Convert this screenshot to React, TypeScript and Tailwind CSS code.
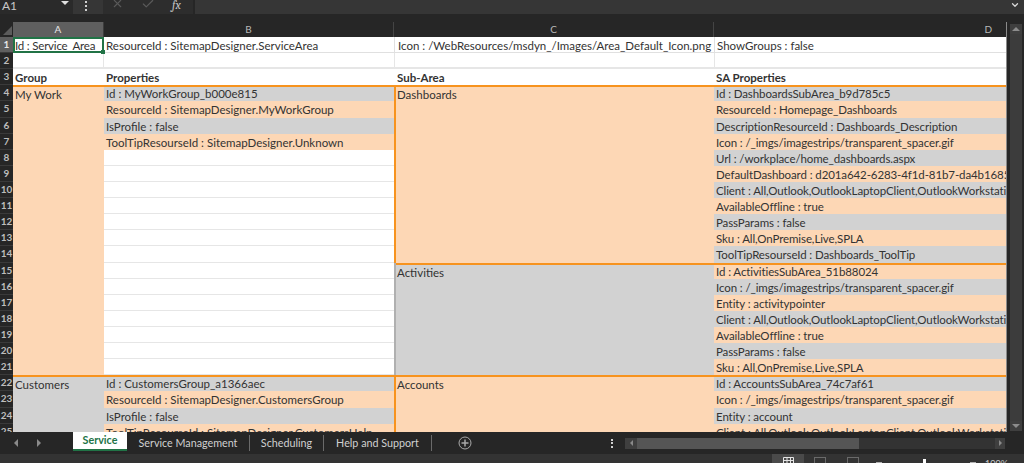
import { Fragment } from 'react';
import { X, Check, ChevronDown } from 'lucide-react';

const ICON = 'Icon : /_imgs/imagestrips/transparent_spacer.gif';
const CLIENT = 'Client : All,Outlook,OutlookLaptopClient,OutlookWorkstationClient,Web';

const bProps: Record<number, string> = {
  4: 'Id : MyWorkGroup_b000e815',
  5: 'ResourceId : SitemapDesigner.MyWorkGroup',
  6: 'IsProfile : false',
  7: 'ToolTipResourseId : SitemapDesigner.Unknown',
  22: 'Id : CustomersGroup_a1366aec',
  23: 'ResourceId : SitemapDesigner.CustomersGroup',
  24: 'IsProfile : false',
  25: 'ToolTipResourseId : SitemapDesigner.CustomersHelp',
};

const dProps: Record<number, string> = {
  4: 'Id : DashboardsSubArea_b9d785c5',
  5: 'ResourceId : Homepage_Dashboards',
  6: 'DescriptionResourceId : Dashboards_Description',
  7: ICON,
  8: 'Url : /workplace/home_dashboards.aspx',
  9: 'DefaultDashboard : d201a642-6283-4f1d-81b7-da4b1685e695',
  10: CLIENT,
  11: 'AvailableOffline : true',
  12: 'PassParams : false',
  13: 'Sku : All,OnPremise,Live,SPLA',
  14: 'ToolTipResourseId : Dashboards_ToolTip',
  15: 'Id : ActivitiesSubArea_51b88024',
  16: ICON,
  17: 'Entity : activitypointer',
  18: CLIENT,
  19: 'AvailableOffline : true',
  20: 'PassParams : false',
  21: 'Sku : All,OnPremise,Live,SPLA',
  22: 'Id : AccountsSubArea_74c7af61',
  23: ICON,
  24: 'Entity : account',
  25: CLIENT,
};

const rows = Array.from({ length: 25 }, (_, i) => i + 1);
const cell = 'overflow-hidden whitespace-nowrap pl-[2px] text-[11.5px] leading-[17px] text-[#333333]';
const PEACH = 'bg-[#fdd7b5]';
const GREY = 'bg-[#d2d2d2]';
const TOP_LINE = 'shadow-[inset_0_2px_0_#f7931e]';

function stripe(n: number) {
  return n % 2 === 0 ? GREY : PEACH;
}

function FormulaBar() {
  return (
    <div className="flex h-[14px] flex-none overflow-hidden bg-[#363636]">
      <div className="flex w-[73px] items-start justify-between bg-[#2a2a2a] pl-[2px] pr-[4px] text-[12px] leading-[11px] text-[#c8c8c8]">
        <span>A1</span>
        <span className="mt-[1px] h-0 w-0 border-x-[4px] border-t-[4px] border-x-transparent border-t-[#e0e0e0]" />
      </div>
      <div className="flex w-[30px] flex-col items-center gap-[2px] pr-[4px] pt-[1px]">
        <span className="h-[2px] w-[2px] bg-[#d0d0d0]" />
        <span className="h-[2px] w-[2px] bg-[#d0d0d0]" />
        <span className="h-[2px] w-[2px] bg-[#d0d0d0]" />
      </div>
      <div className="flex w-[90px] items-start bg-[#2d2d2d] pl-[8px] text-[#5a5a5a]">
        <X size={13} className="mt-[-3px]" />
        <Check size={14} className="ml-[17px] mt-[-3px]" />
        <span className="ml-[17px] font-serif text-[12px] italic leading-[10px] text-[#c4c4c4]">fx</span>
      </div>
      <div className="flex-1 border-l-2 border-[#262626]" />
      <div className="flex w-[18px] justify-center">
        <ChevronDown size={10} strokeWidth={3} className="text-[#d8d8d8]" />
      </div>
    </div>
  );
}

function Sheet() {
  return (
    <div className="h-[410px] flex-none overflow-hidden">
      <div className="grid grid-cols-[13px_91px_290px_320px_292px_18px] grid-rows-[15px_repeat(25,16.11px)] bg-[#262626]">
        {/* column headers */}
        <div className="relative bg-[#262626]">
          <span className="absolute bottom-[2px] right-[1px] h-0 w-0 border-b-[9px] border-l-[9px] border-b-[#5c5c5c] border-l-transparent" />
        </div>
        <div className="border-r border-[#3c3c3c] bg-[#5f5f5f] text-center text-[10px] leading-[15px] text-[#e6e6e6]">A</div>
        <div className="border-r border-[#444444] text-center text-[10px] leading-[15px] text-[#b8b8b8]">B</div>
        <div className="border-r border-[#444444] text-center text-[10px] leading-[15px] text-[#b8b8b8]">C</div>
        <div className="pr-[14px] text-right text-[10px] leading-[15px] text-[#b8b8b8]">D</div>
        <div className="col-start-6 row-start-1 row-span-26 flex h-[410px] flex-col border-l border-[#8a8a8a] bg-[#262626] pl-[3px] pr-[2px]">
          <div className="mt-[2px] flex h-[10px] flex-none items-center justify-center bg-[#3f3f3f]">
            <span className="h-0 w-0 border-x-[4px] border-b-[4px] border-x-transparent border-b-[#8c8c8c]" />
          </div>
          <div className="flex-1 bg-[#3c3c3c]" />
          <div className="mb-[1px] flex h-[10px] flex-none items-center justify-center bg-[#3f3f3f]">
            <span className="h-0 w-0 border-x-[4px] border-t-[4px] border-x-transparent border-t-[#8c8c8c]" />
          </div>
        </div>

        {rows.map((r) => (
          <Fragment key={r}>
            <div
              className={`overflow-hidden border-b border-[#3a3a3a] text-center text-[10px] font-bold leading-[15px] ${
                r === 1 ? 'bg-[#5f5f5f] text-[#e6e6e6]' : 'bg-[#262626] text-[#bdbdbd]'
              }`}
              style={{ gridColumnStart: 1, gridRowStart: r + 1 }}
            >
              {r}
            </div>
            {r >= 8 && r <= 21 && (
              <div
                className="border-b border-[#e6e6e6] bg-white"
                style={{ gridColumnStart: 3, gridRowStart: r + 1 }}
              />
            )}
            {bProps[r] && (
              <div
                className={`${cell} ${stripe(r)} ${r === 4 || r === 22 ? TOP_LINE : ''}`}
                style={{ gridColumnStart: 3, gridRowStart: r + 1 }}
              >
                {bProps[r]}
              </div>
            )}
            {dProps[r] && (
              <div
                className={`${cell} tracking-[-0.1px] ${stripe(r)} ${r === 4 || r === 15 || r === 22 ? TOP_LINE : ''}`}
                style={{ gridColumnStart: 5, gridRowStart: r + 1 }}
              >
                {dProps[r]}
              </div>
            )}
          </Fragment>
        ))}

        {/* rows 1-3 */}
        <div className={`${cell} col-start-2 row-start-2 bg-white tracking-[-0.2px]`}>Id : Service_Area</div>
        {/* selection frame and fill handle over A1 */}
        <div className="relative z-10 col-start-2 row-start-2 border-2 border-[#217346]">
          <span className="absolute bottom-[-3px] right-[-3px] h-[4px] w-[4px] bg-[#217346]" />
        </div>
        <div className={`${cell} col-start-3 row-start-2 border-b border-[#e0e0e0] bg-white`}>ResourceId : SitemapDesigner.ServiceArea</div>
        <div className={`${cell} col-start-4 row-start-2 border-b border-l border-[#e0e0e0] bg-white pl-[3px]`}>Icon : /WebResources/msdyn_/Images/Area_Default_Icon.png</div>
        <div className={`${cell} col-start-5 row-start-2 border-b border-l border-[#e0e0e0] bg-white`}>ShowGroups : false</div>

        <div className="col-start-2 row-start-3 border-b-2 border-r border-[#e6e6e6] bg-white" />
        <div className="col-start-3 row-start-3 border-b-2 border-[#e6e6e6] bg-white" />
        <div className="col-start-4 row-start-3 border-b-2 border-l border-[#e6e6e6] bg-white" />
        <div className="col-start-5 row-start-3 border-b-2 border-l border-[#e6e6e6] bg-white" />

        <div className={`${cell} col-start-2 row-start-4 bg-white font-bold`}>Group</div>
        <div className={`${cell} col-start-3 row-start-4 bg-white font-bold`}>Properties</div>
        <div className={`${cell} col-start-4 row-start-4 bg-white pl-[3px] font-bold`}>Sub-Area</div>
        <div className={`${cell} col-start-5 row-start-4 bg-white font-bold`}>SA Properties</div>

        {/* merged cells */}
        <div className={`${cell} col-start-2 row-start-5 row-span-18 pt-[1px] ${TOP_LINE} ${PEACH}`}>My Work</div>
        <div className={`${cell} col-start-2 row-start-23 row-span-4 pt-[1px] ${TOP_LINE} ${GREY}`}>Customers</div>
        <div className={`${cell} col-start-4 row-start-5 row-span-11 pl-[3px] pt-[1px] shadow-[inset_2px_2px_0_#f7931e] ${PEACH}`}>Dashboards</div>
        <div className={`${cell} col-start-4 row-start-16 row-span-7 pl-[3px] pt-[1px] shadow-[inset_2px_0_0_#b0b0b0,inset_0_2px_0_#f7931e] ${GREY}`}>Activities</div>
        <div className={`${cell} col-start-4 row-start-23 row-span-4 pl-[3px] pt-[1px] shadow-[inset_2px_2px_0_#f7931e] ${PEACH}`}>Accounts</div>
      </div>
    </div>
  );
}

function Tabs() {
  return (
    <div className="flex h-[22px] flex-none items-center bg-[#262626] text-[10.75px] text-[#d0d0d0]">
      <div className="flex w-[73px] items-center pl-[14px]">
        <span className="h-0 w-0 border-y-[4px] border-r-[4px] border-y-transparent border-r-[#8a8a8a]" />
        <span className="ml-[19px] h-0 w-0 border-y-[4px] border-l-[4px] border-y-transparent border-l-[#8a8a8a]" />
      </div>
      <div className="flex h-[19px] w-[54px] items-center justify-center self-start border-b-2 border-[#217346] bg-white font-bold leading-none text-[#217346]">
        Service
      </div>
      <div className="flex h-[16px] w-[123px] items-center justify-center border-r border-[#6a6a6a]">Service Management</div>
      <div className="flex h-[16px] w-[74px] items-center justify-center border-r border-[#6a6a6a]">Scheduling</div>
      <div className="flex h-[16px] w-[108px] items-center justify-center border-r border-[#6a6a6a]">Help and Support</div>
      <svg width="14" height="14" viewBox="0 0 14 14" className="ml-[26px] text-[#a8a8a8]" fill="none" stroke="currentColor">
        <circle cx="7" cy="7" r="6" />
        <path d="M7 3.500v7M3.500 7h7" strokeWidth="1.500" />
      </svg>
      <div className="ml-[139px] flex flex-col gap-[1.5px]">
        <span className="h-[2px] w-[2px] bg-[#d0d0d0]" />
        <span className="h-[2px] w-[2px] bg-[#d0d0d0]" />
        <span className="h-[2px] w-[2px] bg-[#d0d0d0]" />
      </div>
      <div className="ml-[12px] flex h-[11px] w-[380px] items-center bg-[#333333]">
        <div className="flex h-full w-[12px] items-center justify-center bg-[#3f3f3f]">
          <span className="h-0 w-0 border-y-[3px] border-r-[3px] border-y-transparent border-r-[#8a8a8a]" />
        </div>
        <div className="h-full w-[222px] bg-[#555555]" />
        <div className="flex-1" />
        <div className="flex h-full w-[10px] items-center justify-center bg-[#3f3f3f]">
          <span className="h-0 w-0 border-y-[3px] border-l-[3px] border-y-transparent border-l-[#8a8a8a]" />
        </div>
      </div>
    </div>
  );
}

function StatusBar() {
  return (
    <div className="flex h-[9px] flex-none items-start overflow-hidden bg-[#333333] text-[#c8c8c8]">
      <div className="ml-[772px] flex h-full w-[32px] justify-center bg-[#4a4a4a] pt-[3px]">
        <svg width="11" height="8" viewBox="0 0 11 8" fill="none" stroke="#e4e4e4" className="flex-none">
          <path d="M.5.5h10v8H.5zM.5 3.500h10M4 .5v8M7.500 .5v8" />
        </svg>
      </div>
      <div className="ml-[10px] mt-[3px] h-[8px] w-[12px] border border-[#6a6a6a]" />
      <div className="ml-[21px] mt-[3px] h-[8px] w-[12px] border border-[#6a6a6a]" />
      <div className="ml-[17px] mt-[8px] h-[1px] w-[6px] bg-[#b0b0b0]" />
      <div className="ml-[41px] mt-[5px] h-[8px] w-[3px] flex-none bg-white" />
      <div className="ml-[44px] mt-[8px] h-[1px] w-[6px] bg-[#b0b0b0]" />
      <span className="ml-[9px] mt-[5px] text-[9px] leading-[10px]">100%</span>
    </div>
  );
}

export default function App() {
  return (
    <div className="flex h-[463px] w-[1024px] flex-col overflow-hidden bg-[#262626] font-['Lato','Liberation_Sans',sans-serif]">
      <FormulaBar />
      <div className="h-[8px] flex-none bg-[#262626]" />
      <Sheet />
      <Tabs />
      <StatusBar />
    </div>
  );
}
